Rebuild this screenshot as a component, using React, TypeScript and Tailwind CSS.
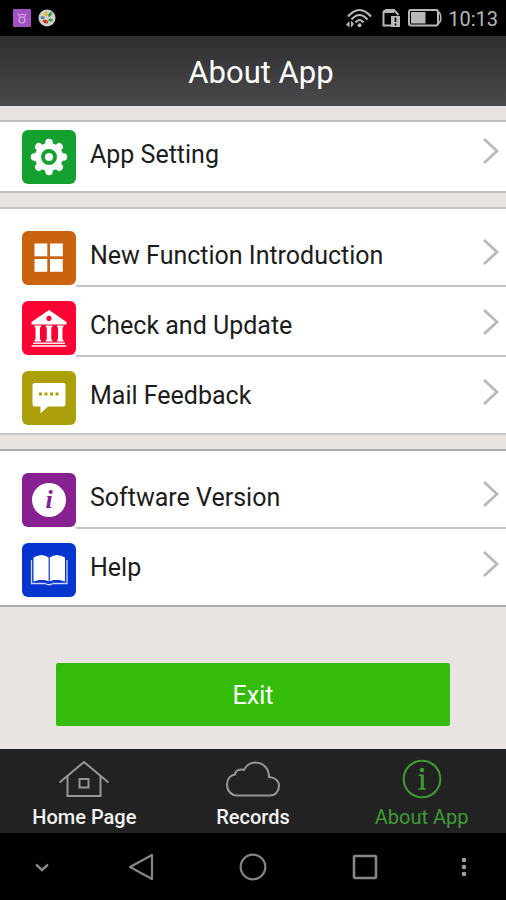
import React from "react"

type IconProps = { className?: string }

const GearIcon = () => (
  <svg viewBox="0 0 54 54" className="size-full" fill="none">
    <circle cx="27" cy="27" r="14" fill="#fff" />
    <g stroke="#fff" strokeWidth="7.500" strokeLinecap="round">
      <path d="M27 12.500 V41.500 M12.500 27 H41.500 M16.800 16.800 L37.200 37.200 M37.200 16.800 L16.800 37.200" />
    </g>
    <circle cx="27" cy="27" r="6" stroke="#15a12f" strokeWidth="4" />
  </svg>
)

const GridIcon = () => (
  <svg viewBox="0 0 54 54" className="size-full" fill="#fff">
    <rect x="12.500" y="12.500" width="12.800" height="12.800" />
    <rect x="28" y="12.500" width="12.800" height="12.800" />
    <rect x="12.500" y="28" width="12.800" height="12.800" />
    <rect x="28" y="28" width="12.800" height="12.800" />
  </svg>
)

const BankIcon = () => (
  <svg viewBox="0 0 54 54" className="size-full" fill="#fff">
    <path
      fillRule="evenodd"
      d="M27 9 L44.500 21 V23.500 H9.500 V21 Z M27 14.800 a2.700 2.700 0 1 0 0.010 0 Z"
    />
    <path d="M12.500 24.500 h6.500 v1.500 l-1 0.500 v12 l1 0.500 v1.500 h-6.500 v-1.500 l1 -0.500 v-12 l-1 -0.500 Z" />
    <path d="M23.800 24.500 h6.500 v1.500 l-1 0.500 v12 l1 0.500 v1.500 h-6.500 v-1.500 l1 -0.500 v-12 l-1 -0.500 Z" />
    <path d="M35 24.500 h6.500 v1.500 l-1 0.500 v12 l1 0.500 v1.500 h-6.500 v-1.500 l1 -0.500 v-12 l-1 -0.500 Z" />
    <rect x="11" y="41.500" width="32" height="1.400" />
    <rect x="9.500" y="44.200" width="35" height="1.500" />
  </svg>
)

const ChatIcon = () => (
  <svg viewBox="0 0 54 54" className="size-full">
    <path
      d="M12.500 12 H41.500 Q43.500 12 43.500 14 V33 Q43.500 35.500 41.500 35.500 H26 L18.500 42.500 V35.500 H12.500 Q10.500 35.500 10.500 33 V14 Q10.500 12 12.500 12 Z"
      fill="#fff"
    />
    <g fill="#aca00a">
      <rect x="17" y="21.500" width="3" height="3" />
      <rect x="22.500" y="21.500" width="3" height="3" />
      <rect x="28" y="21.500" width="3" height="3" />
      <rect x="33.500" y="21.500" width="3" height="3" />
    </g>
  </svg>
)

const VersionIcon = () => (
  <svg viewBox="0 0 54 54" className="size-full">
    <circle cx="27" cy="27" r="17" fill="#fff" />
    <text
      x="27"
      y="35"
      textAnchor="middle"
      fill="#86218f"
      className="font-['Liberation_Serif',serif] text-[26px] font-bold italic"
    >
      i
    </text>
  </svg>
)

const BookIcon = () => (
  <svg viewBox="0 0 54 54" className="size-full">
    <path
      d="M9.500 17 V40.500 H23 Q27 43 31 40.500 H45 V17"
      fill="none"
      stroke="#fff"
      strokeOpacity="0.800"
      strokeWidth="1.300"
    />
    <path d="M11.500 14.500 Q20 9.500 26.600 14.500 V38.500 Q20 36 11.500 38.500 Z" fill="#fff" />
    <path d="M27.800 14.500 Q34.500 9.500 43 14.500 V38.500 Q34.500 36 27.800 38.500 Z" fill="#fff" />
    <path d="M14 39 Q20 36.500 26 39 M28.500 39 Q34.500 36.500 40.500 39" fill="none" stroke="#0634cf" strokeWidth="1.500" />
  </svg>
)

const Chevron = () => (
  <svg viewBox="0 0 18 30" className="mr-1.5 h-[30px] w-[18px] shrink-0">
    <path d="M2 3 L15 15 L2 27" fill="none" stroke="#b9b9b9" strokeWidth="2.800" />
  </svg>
)

const HomeIcon = ({ className }: IconProps) => (
  <svg viewBox="0 0 54 40" className={className} fill="none" stroke="currentColor" strokeWidth="2">
    <path d="M2.500 23.500 L27 3 L51.500 23.500" />
    <path d="M10.500 17.500 V37 H43.500 V17.500" />
    <rect x="22.500" y="20" width="9" height="8.500" />
  </svg>
)

const CloudIcon = ({ className }: IconProps) => (
  <svg viewBox="0 0 54 40" className={className} fill="none" stroke="currentColor" strokeWidth="2">
    <path d="M11 36.500 C5 36.500 1 31.500 1 25.500 C1 19.500 5 16 9 15.500 C9 11.500 14 9.500 18 11 C20 6 25 3.500 29.500 3.500 C37 3.500 43 9.500 43 18 C49 18.500 53 22 53 27 C53 32 49.500 36.500 44 36.500 Z" />
  </svg>
)

const AboutIcon = ({ className }: IconProps) => (
  <svg viewBox="0 0 54 40" className={className} fill="none" stroke="currentColor" strokeWidth="2">
    <circle cx="27" cy="20" r="18.300" />
    <circle cx="27" cy="11" r="2.300" fill="currentColor" stroke="none" />
    <path d="M23.500 16.300 H27.500 M23.300 30 H31" strokeWidth="1.600" />
    <path d="M27.300 15.600 V30" strokeWidth="3" />
  </svg>
)

const StatusBar = () => (
  <div className="flex h-9 items-center justify-between bg-black pl-[13px] pr-2">
    <div className="flex items-center gap-[7px]">
      <svg viewBox="0 0 18 18" className="size-[18px]">
        <rect width="18" height="18" rx="1" fill="#a052c0" />
        <g fill="none" stroke="#d6a6e6" strokeWidth="1.200">
          <circle cx="9" cy="11" r="3" />
          <path d="M4.500 5 Q6 5 7 8 M13.500 5 Q12 5 11 8 M7 5.500 H11" />
        </g>
      </svg>
      <svg viewBox="0 0 18 18" className="size-[18px]">
        <circle cx="9" cy="9" r="8.500" fill="#d0d0c8" />
        <ellipse cx="8" cy="5" rx="1.600" ry="2.400" fill="#e3b51e" />
        <ellipse cx="12" cy="5.500" rx="1.500" ry="2.600" fill="#2f9b4f" transform="rotate(35 12 5.500)" />
        <ellipse cx="4.500" cy="8.500" rx="2" ry="1.600" fill="#4a86b8" />
        <ellipse cx="7.500" cy="12.500" rx="3" ry="1.600" fill="#c43a30" transform="rotate(25 7.500 12.500)" />
        <ellipse cx="12.500" cy="11" rx="2.400" ry="1.500" fill="#3aa055" />
      </svg>
    </div>
    <div className="flex items-center text-[#b8b8b8]">
      <svg viewBox="0 0 26 20" className="mr-2.5 h-5 w-[26px]" fill="none" stroke="currentColor" strokeWidth="2.200">
        <path d="M2 8.500 Q13.500 -4.500 25 8.500" />
        <path d="M5.500 11.500 Q13.500 2.500 21.500 11.500" />
        <path d="M9.500 14.500 Q13.500 9.500 17.500 14.500" />
        <circle cx="13.500" cy="17.300" r="2" fill="currentColor" stroke="none" />
        <path d="M0 16.500 L3.500 13 V19.500 Z M8 16 L5 12.800 V19.500 Z" fill="currentColor" stroke="none" />
      </svg>
      <svg viewBox="0 0 18 20" className="mr-2 h-5 w-[18px]" fill="none" stroke="currentColor" strokeWidth="2">
        <path d="M9 17.500 H1.500 V4 L4 2 H12 L16.500 7" />
        <path d="M1.500 3.500 H12" strokeWidth="3" />
        <rect x="9" y="8" width="9" height="11" fill="currentColor" stroke="none" />
        <path d="M13.500 9.500 V14 M13.500 15.500 V17.500" stroke="#000" strokeWidth="1.600" />
      </svg>
      <svg viewBox="0 0 34 18" className="mr-1.5 h-[18px] w-[34px]" fill="none">
        <rect x="1" y="1" width="29" height="15.500" rx="2" stroke="currentColor" strokeWidth="2" />
        <rect x="3" y="3" width="14.500" height="11.500" fill="currentColor" />
        <path d="M30.500 3 Q33.500 5 32.500 9 Q33.500 12 30.500 14.500" stroke="currentColor" strokeWidth="1.600" />
      </svg>
      <span className="pt-0.5 text-xl leading-6">10:13</span>
    </div>
  </div>
)

type RowProps = {
  label: string
  color: string
  icon: React.ReactNode
  divider?: boolean
}

const MenuRow = ({ label, color, icon, divider }: RowProps) => (
  <li>
    <a href="#" className="flex h-[70px] items-end pl-[22px]">
      <span className="flex h-14 items-start">
        <span className={`size-[54px] overflow-hidden rounded-md ${color}`}>{icon}</span>
      </span>
      <span
        className={`flex h-full flex-1 items-end justify-between border-b-2 ${
          divider ? "border-[#c4c4c4]" : "border-transparent"
        }`}
      >
        <span className="pb-3 pl-3.5 text-[25px] leading-[34px]">{label}</span>
        <span className="pb-[18px]">
          <Chevron />
        </span>
      </span>
    </a>
  </li>
)

const TabLink = ({ label, icon, active }: { label: string; icon: React.ReactNode; active?: boolean }) => (
  <a
    href="#"
    className={`flex flex-1 flex-col items-center pt-2.5 text-xl leading-6 ${
      active ? "text-[#3f9c35]" : "font-medium text-[#f2f2f2]"
    }`}
  >
    {icon}
    <span className="pt-1.5">{label}</span>
  </a>
)

const App = () => {
  return (
    <div className="flex min-h-screen flex-col bg-[#e8e4e1] font-['Roboto',sans-serif] text-[#1c1c1c]">
      <StatusBar />
      <header className="flex h-[70px] items-center justify-center bg-linear-to-b from-[#2f2e31] to-[#4a494c] pl-4 pt-1">
        <h1 className="text-[31px] leading-9 text-white">About App</h1>
      </header>

      <main className="flex flex-1 flex-col gap-3.5 pt-3.5">
        <ul className="border-y-2 border-[#bfbdbb] bg-white pb-[5px] [&>li]:-mt-[6px]">
          <MenuRow label="App Setting" color="bg-[#15a12f]" icon={<GearIcon />} />
        </ul>
        <ul className="border-y-2 border-[#c6c4c2] bg-white pb-1.5 pt-2">
          <MenuRow label="New Function Introduction" color="bg-[#cb6210]" icon={<GridIcon />} divider />
          <MenuRow label="Check and Update" color="bg-[#fc0334]" icon={<BankIcon />} divider />
          <MenuRow label="Mail Feedback" color="bg-[#aca00a]" icon={<ChatIcon />} />
        </ul>
        <ul className="border-y-2 border-[#ababab] bg-white pb-1.5 pt-2">
          <MenuRow label="Software Version" color="bg-[#86218f]" icon={<VersionIcon />} divider />
          <MenuRow label="Help" color="bg-[#0634cf]" icon={<BookIcon />} />
        </ul>
        <div className="px-14 pb-[23px] pt-[42px]">
          <button type="button" className="h-[63px] w-full rounded-xs bg-[#34bc08] pt-[3px] text-[25px] text-white">
            Exit
          </button>
        </div>
      </main>

      <nav className="flex h-[84px] bg-[#222]">
        <TabLink label="Home Page" icon={<HomeIcon className="h-10 w-[54px] text-[#969696]" />} />
        <TabLink label="Records" icon={<CloudIcon className="h-10 w-[54px] text-[#969696]" />} />
        <TabLink label="About App" icon={<AboutIcon className="h-10 w-[54px]" />} active />
      </nav>

      <div className="flex h-[67px] items-center bg-black text-[#858585]">
        <button type="button" aria-label="Hide bar" className="flex w-1/6 justify-center">
          <svg viewBox="0 0 28 28" className="size-7" fill="none" stroke="currentColor" strokeWidth="2.400">
            <path d="M8 11.500 L14 17 L20 11.500" />
          </svg>
        </button>
        <button type="button" aria-label="Back" className="flex flex-1 justify-center">
          <svg viewBox="0 0 28 28" className="size-7" fill="none" stroke="currentColor" strokeWidth="2.200" strokeLinejoin="round">
            <path d="M25 2 V26 L3 14 Z" />
          </svg>
        </button>
        <button type="button" aria-label="Home" className="flex flex-1 justify-center">
          <svg viewBox="0 0 28 28" className="size-7" fill="none" stroke="currentColor" strokeWidth="2.200">
            <circle cx="14" cy="14" r="12.300" />
          </svg>
        </button>
        <button type="button" aria-label="Recent apps" className="flex flex-1 justify-center">
          <svg viewBox="0 0 28 28" className="size-7" fill="none" stroke="currentColor" strokeWidth="2.600">
            <rect x="3" y="3" width="22" height="22" rx="1" />
          </svg>
        </button>
        <button type="button" aria-label="More" className="flex w-1/6 justify-center">
          <svg viewBox="0 0 28 28" className="size-7" fill="#a0a0a0">
            <circle cx="14" cy="7" r="2.300" />
            <circle cx="14" cy="14" r="2.300" />
            <circle cx="14" cy="21" r="2.300" />
          </svg>
        </button>
      </div>
    </div>
  )
}

export default App
